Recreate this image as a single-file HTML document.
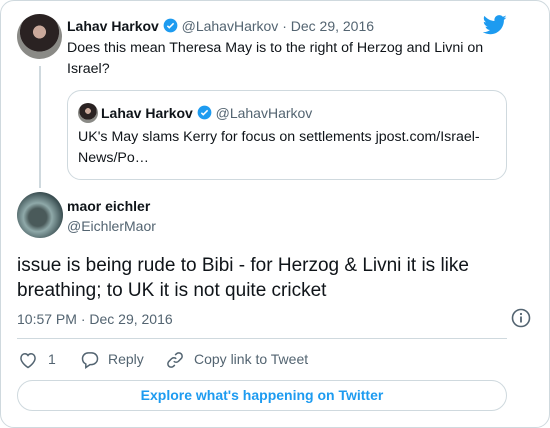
<!DOCTYPE html>
<html><head><style>
*{margin:0;padding:0;box-sizing:border-box}
body{width:550px;height:428px;background:#fff;font-family:"Liberation Sans",Arial,sans-serif;color:#0f1419;position:relative;overflow:hidden}
.card{position:absolute;left:0;top:0;width:550px;height:428px;border:1px solid #cfd9de;border-radius:14px}
.a{position:absolute}
.g{color:#536471}
</style></head><body>
<div class="card"></div>
<div class="a" style="left:17px;top:14px;width:45px;height:45px;border-radius:50%;background:radial-gradient(circle at 50% 40%,#c9a89a 0 18%,#2a2222 19% 55%,#8a8a86 56%)"></div>
<div class="a" style="left:39px;top:66px;width:2px;height:122px;background:#cfd9de"></div>
<div class="a" style="left:67px;top:18px;font-size:14px;white-space:nowrap"><b>Lahav Harkov</b> <svg width="15" height="15" viewBox="0 0 24 24" style="vertical-align:-2px"><circle cx="12" cy="12" r="11" fill="#1d9bf0"/><path d="M7 12.5l3 3 7-7" stroke="#fff" stroke-width="2.4" fill="none"/></svg> <span class="g">@LahavHarkov · Dec 29, 2016</span></div>
<svg class="a" style="left:483px;top:15px" width="24" height="20" viewBox="0 0 24 20"><path fill="#1d9bf0" d="M23.6 2.4c-.9.4-1.8.6-2.8.8 1-.6 1.8-1.6 2.1-2.7-.9.6-2 1-3.1 1.2C18.9.7 17.6.1 16.200.1c-2.7 0-4.8 2.2-4.8 4.8 0 .4 0 .8.1 1.1C7.5 5.8 3.9 3.900 1.5.9c-.4.7-.7 1.6-.7 2.4 0 1.7.9 3.2 2.2 4-.8 0-1.5-.2-2.2-.6v.1c0 2.3 1.7 4.3 3.9 4.7-.4.1-.8.2-1.3.2-.3 0-.6 0-.9-.1.6 1.9 2.4 3.3 4.5 3.4-1.7 1.3-3.7 2.1-6 2.1-.4 0-.8 0-1.200-.1 2.1 1.4 4.7 2.2 7.4 2.2 8.9 0 13.7-7.4 13.7-13.7v-.6c1-.7 1.8-1.5 2.5-2.5z"/></svg>
<div class="a" style="left:67px;top:38px;width:440px;font-size:14.2px;line-height:21px">Does this mean Theresa May is to the right of Herzog and Livni on Israel?</div>
<div class="a" style="left:67px;top:90px;width:440px;height:90px;border:1px solid #cfd9de;border-radius:14px"></div>
<div class="a" style="left:78px;top:103px;width:20px;height:20px;border-radius:50%;background:radial-gradient(circle at 50% 40%,#c9a89a 0 18%,#2a2222 19% 55%,#8a8a86 56%)"></div>
<div class="a" style="left:101px;top:105px;font-size:14px;white-space:nowrap"><b>Lahav Harkov</b> <svg width="15" height="15" viewBox="0 0 24 24" style="vertical-align:-2px"><circle cx="12" cy="12" r="11" fill="#1d9bf0"/><path d="M7 12.5l3 3 7-7" stroke="#fff" stroke-width="2.4" fill="none"/></svg> <span class="g">@LahavHarkov</span></div>
<div class="a" style="left:78px;top:127px;width:425px;font-size:14.2px;line-height:21px">UK's May slams Kerry for focus on settlements jpost.com/Israel-News/Po…</div>
<div class="a" style="left:17px;top:192px;width:46px;height:46px;border-radius:50%;background:radial-gradient(circle at 45% 55%,#4a5a5a 0 25%,#8fa9a9 40%,#3b4f52 70%)"></div>
<div class="a" style="left:67px;top:198px;font-size:14px;font-weight:bold">maor eichler</div>
<div class="a g" style="left:67px;top:218px;font-size:14px">@EichlerMaor</div>
<div class="a" style="left:17px;top:253px;width:500px;font-size:19px;line-height:25px">issue is being rude to Bibi - for Herzog &amp; Livni it is like breathing; to UK it is not quite cricket</div>
<div class="a g" style="left:17px;top:311px;font-size:14px">10:57 PM · Dec 29, 2016</div>
<svg class="a" style="left:510px;top:307px" width="22" height="22" viewBox="0 0 22 22"><circle cx="11" cy="11" r="8.5" fill="none" stroke="#536471" stroke-width="1.6"/><circle cx="11" cy="7" r="1.1" fill="#536471"/><path d="M11 9.5v6" stroke="#536471" stroke-width="1.8"/></svg>
<div class="a" style="left:17px;top:338px;width:490px;height:1px;background:#cfd9de"></div>
<svg class="a" style="left:18px;top:350px" width="20" height="20" viewBox="0 0 24 24"><path d="M12 21s-8.5-5.3-8.5-11.2C3.5 6.6 5.7 4.5 8.3 4.5c1.6 0 2.9.8 3.7 2 .8-1.2 2.1-2 3.7-2 2.6 0 4.8 2.1 4.8 5.3C20.5 15.7 12 21 12 21z" fill="none" stroke="#536471" stroke-width="1.8"/></svg>
<div class="a g" style="left:48px;top:351px;font-size:14px">1</div>
<svg class="a" style="left:80px;top:350px" width="20" height="20" viewBox="0 0 24 24"><path d="M10 3.5h4c4 0 7 3 7 7s-3.5 7-7.5 7H12l-5 3.5v-4.2C4.6 15.6 3 13.3 3 10.5c0-4 3-7 7-7z" fill="none" stroke="#536471" stroke-width="1.8"/></svg>
<div class="a g" style="left:108px;top:351px;font-size:14px">Reply</div>
<svg class="a" style="left:165px;top:350px" width="20" height="20" viewBox="0 0 24 24"><path d="M10.5 13.5a4 4 0 0 0 5.7 0l3.2-3.2a4 4 0 0 0-5.7-5.7l-1.5 1.5M13.5 10.5a4 4 0 0 0-5.7 0l-3.2 3.2a4 4 0 0 0 5.7 5.7l1.5-1.5" fill="none" stroke="#536471" stroke-width="1.8"/></svg>
<div class="a g" style="left:194px;top:351px;font-size:14px">Copy link to Tweet</div>
<div class="a" style="left:17px;top:380px;width:490px;height:31px;border:1px solid #cfd9de;border-radius:16px;text-align:center;line-height:29px;font-size:14px;font-weight:bold;color:#1d9bf0">Explore what's happening on Twitter</div>
</body></html>
